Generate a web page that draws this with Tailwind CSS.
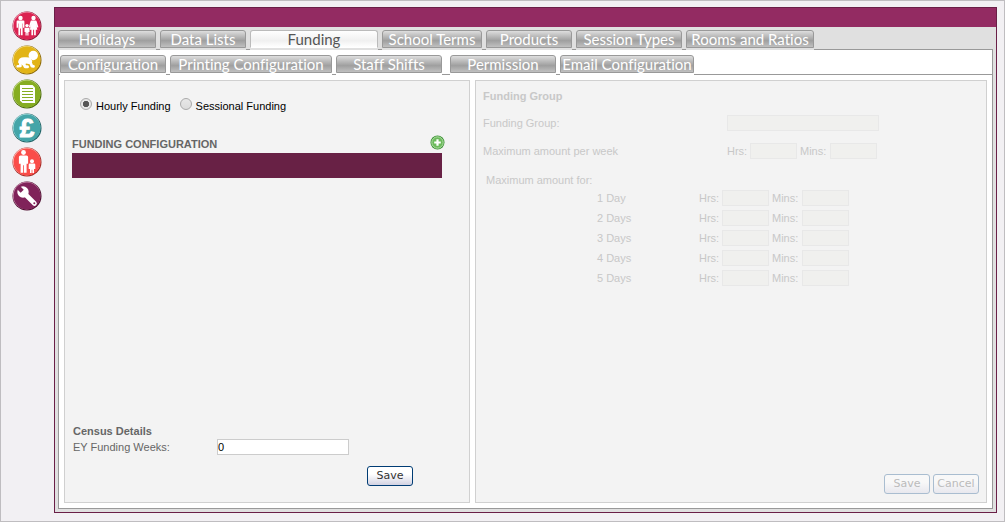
<!DOCTYPE html>
<html lang="en">
<head>
  <meta charset="UTF-8" />
  <meta name="viewport" content="width=device-width, initial-scale=1.0" />
  <title>Funding</title>
  <script src="https://cdn.jsdelivr.net/npm/@tailwindcss/browser@4"></script>
</head>
<body class="flex min-h-screen border border-[#bfbdc0] bg-[#f2f0f3] font-['Liberation_Sans',Arial,sans-serif] text-[11px] leading-4 text-[#666]">

  <!-- Side menu -->
  <nav class="flex w-[53px] flex-col items-center gap-1 pt-[10px] pr-px" aria-label="Main">
    <a href="#" aria-label="Families" class="block size-[30px]">
      <svg viewBox="0 0 30 30" class="size-full">
        <circle cx="15" cy="15" r="14.5" fill="#8f1335" /><circle cx="14.6" cy="14.6" r="13.8" fill="#f39ab0" /><circle cx="15" cy="15" r="13.4" fill="#db2351" />
        <g fill="#fff">
          <circle cx="8.5" cy="7" r="2.2" /><path d="M5.6 9.600h5.800q1 0 1 1v6.200H11v-4.400h-.4v11.900H9v-6.900h-.8v6.900H6.400V12.400H6v4.400H4.600v-6.200q0-1 1-1z" />
          <circle cx="21.500" cy="7" r="2.200" /><path d="M19.300 9.600h4.400q.8 0 1 .8l1.700 5.800-1.500.4-1.200-4 1.700 6.200h-1.600v5.500h-1.700v-5.500h-1v5.500h-1.700v-5.500h-1.600l1.700-6.200-1.200 4-1.500-.4 1.700-5.800q.2-.8 1-.8z" />
          <circle cx="15" cy="14.600" r="1.700" /><path d="M13.200 16.800h3.600q.7 0 .7.700v3.400h-1v3.600h-1.200v-2.800h-.6v2.800h-1.200v-3.600h-1v-3.400q0-.7.700-.7z" />
        </g>
      </svg>
    </a>
    <a href="#" aria-label="Children" class="block size-[30px]">
      <svg viewBox="0 0 30 30" class="size-full">
        <circle cx="15" cy="15" r="14.5" fill="#8d6a08" /><circle cx="14.6" cy="14.6" r="13.8" fill="#f3dc8a" /><circle cx="15" cy="15" r="13.4" fill="#e2b416" />
        <circle cx="21.300" cy="10.500" r="4.700" fill="#fff" />
        <path d="M6 17.500Q6.500 12.300 12 12.300q3.500-.3 5.300.3L20.500 16l-2.500 3.200-4-.700-2 2.500z" fill="#fff" />
        <g fill="none" stroke="#fff" stroke-linecap="round" stroke-linejoin="round">
          <path d="M17.500 15l2.300 6 1.700.3" stroke-width="2.800" />
          <path d="M10.500 17l2.700 4.700h2.300" stroke-width="3" />
          <path d="M8 17.500L8.500 21l-2.800.3" stroke-width="2.600" />
        </g>
      </svg>
    </a>
    <a href="#" aria-label="Registers" class="block size-[30px]">
      <svg viewBox="0 0 30 30" class="size-full">
        <circle cx="15" cy="15" r="14.5" fill="#4b6a0d" /><circle cx="14.6" cy="14.6" r="13.8" fill="#c5dc85" /><circle cx="15" cy="15" r="13.4" fill="#86ad22" />
        <path d="M8 6h12.500L23 8.500V24H10.500L8 21.500z" fill="#fff" />
        <path d="M10 9.500h11M10 12.500h11M10 15.500h11M10 18.500h11M10 21.500h11" stroke="#86ad22" />
      </svg>
    </a>
    <a href="#" aria-label="Finance" class="block size-[30px]">
      <svg viewBox="0 0 30 30" class="size-full">
        <circle cx="15" cy="15" r="14.5" fill="#1f6265" /><circle cx="14.6" cy="14.6" r="13.8" fill="#a3dadb" /><circle cx="15" cy="15" r="13.4" fill="#44a5a8" />
        <text x="15" y="24" text-anchor="middle" font-family="Liberation Sans" font-size="26" font-weight="700" fill="#fff" stroke="#fff">£</text>
      </svg>
    </a>
    <a href="#" aria-label="Staff" class="block size-[30px]">
      <svg viewBox="0 0 30 30" class="size-full">
        <circle cx="15" cy="15" r="14.5" fill="#a52a25" /><circle cx="14.6" cy="14.6" r="13.8" fill="#ffb4ae" /><circle cx="15" cy="15" r="13.4" fill="#fa4d49" />
        <g fill="#fff">
          <circle cx="11.500" cy="5.500" r="2.400" /><path d="M8.500 8.400h6q1.600 0 1.600 1.600v6.700h-1.500v9H12v-7.500h-.8v7.500H8.600v-9H6.900V10q0-1.600 1.600-1.600z" />
          <circle cx="20" cy="14.200" r="2" /><path d="M17.900 16.600h4.200q1.200 0 1.200 1.200v4.200H22v4h-1.600v-3.300h-.8V26H18v-4h-1.300v-4.200q0-1.200 1.200-1.200z" />
        </g>
      </svg>
    </a>
    <a href="#" aria-label="Settings" class="block size-[30px]">
      <svg viewBox="0 0 30 30" class="size-full">
        <circle cx="15" cy="15" r="14.5" fill="#4d0d2e" /><circle cx="14.6" cy="14.6" r="13.8" fill="#c88bac" /><circle cx="15" cy="15" r="13.4" fill="#80235a" />
        <circle cx="11" cy="11" r="5.700" fill="#fff" />
        <path d="M12 12l10.500 10.500" stroke="#fff" stroke-width="4.600" stroke-linecap="round" />
        <path d="M5.500 5.500l4.700 4.700" stroke="#80235a" stroke-width="4.400" />
        <circle cx="22.300" cy="22.300" r="1" fill="#80235a" />
      </svg>
    </a>
  </nav>

  <div class="mt-[6px] mr-[7px] mb-2 flex flex-1 flex-col border border-[#6a1f47] bg-[#e0e0e0]">
    <header class="h-[19px] bg-[#932b62]"></header>

    <div class="flex flex-1 flex-col p-[3px]">
      <!-- Main tabs -->
      <nav class="relative z-10 -mb-px flex gap-1 font-[Lato,sans-serif] text-[15px] leading-4 text-white [font-variant-ligatures:none]" aria-label="Sections">
        <a href="#" class="w-[98px] border-b-2 border-[#e0e0e0] text-center"><span class="block rounded-t-[3px] border border-[#999] bg-linear-to-b from-[#dedede] via-[#9f9f9f] via-60% to-[#c0c0c0]">Holidays</span></a>
        <a href="#" class="w-[86px] border-b-2 border-[#e0e0e0] text-center"><span class="block rounded-t-[3px] border border-[#999] bg-linear-to-b from-[#dedede] via-[#9f9f9f] via-60% to-[#c0c0c0]">Data Lists</span></a>
        <a href="#" class="w-[128px] border-b-2 border-[#e0e0e0] text-center text-[#555]" aria-current="page"><span class="block rounded-t-[3px] border border-[#bbb] border-b-white bg-linear-to-b from-white via-[#f0f0f0] via-60% to-white">Funding</span></a>
        <a href="#" class="w-[100px] border-b-2 border-[#e0e0e0] text-center"><span class="block rounded-t-[3px] border border-[#999] bg-linear-to-b from-[#dedede] via-[#9f9f9f] via-60% to-[#c0c0c0]">School Terms</span></a>
        <a href="#" class="w-[86px] border-b-2 border-[#e0e0e0] text-center"><span class="block rounded-t-[3px] border border-[#999] bg-linear-to-b from-[#dedede] via-[#9f9f9f] via-60% to-[#c0c0c0]">Products</span></a>
        <a href="#" class="w-[106px] border-b-2 border-[#e0e0e0] text-center"><span class="block rounded-t-[3px] border border-[#999] bg-linear-to-b from-[#dedede] via-[#9f9f9f] via-60% to-[#c0c0c0]">Session Types</span></a>
        <a href="#" class="w-[128px] border-b-2 border-[#e0e0e0] text-center"><span class="block rounded-t-[3px] border border-[#999] bg-linear-to-b from-[#dedede] via-[#9f9f9f] via-60% to-[#c0c0c0]">Rooms and Ratios</span></a>
      </nav>

      <div class="flex flex-1 flex-col border border-[#999] bg-white">
        <!-- Sub tabs -->
        <nav class="flex gap-1 border-b border-[#999] pt-[5px] pl-px font-[Lato,sans-serif] text-[15px] leading-4 text-white [font-variant-ligatures:none]" aria-label="Funding sections">
          <a href="#" class="-mb-px w-[106px] border-b-2 border-white text-center"><span class="block rounded-t-[3px] border border-[#999] bg-linear-to-b from-[#dedede] via-[#9f9f9f] via-60% to-[#c0c0c0]">Configuration</span></a>
          <a href="#" class="-mb-px w-[162px] border-b-2 border-white text-center"><span class="block rounded-t-[3px] border border-[#999] bg-linear-to-b from-[#dedede] via-[#9f9f9f] via-60% to-[#c0c0c0]">Printing Configuration</span></a>
          <a href="#" class="mr-1 -mb-px w-[106px] border-b-2 border-white text-center"><span class="block rounded-t-[3px] border border-[#999] bg-linear-to-b from-[#dedede] via-[#9f9f9f] via-60% to-[#c0c0c0]">Staff Shifts</span></a>
          <a href="#" class="-mb-px w-[106px] border-b-2 border-white text-center"><span class="block rounded-t-[3px] border border-[#999] bg-linear-to-b from-[#dedede] via-[#9f9f9f] via-60% to-[#c0c0c0]">Permission</span></a>
          <a href="#" class="-mb-px w-[134px] border-b-2 border-white text-center"><span class="block rounded-t-[3px] border border-[#999] bg-linear-to-b from-[#dedede] via-[#9f9f9f] via-60% to-[#c0c0c0]">Email Configuration</span></a>
        </nav>

        <main class="grid flex-1 grid-cols-[406px_1fr] gap-[5px] p-[5px]">
          <!-- Funding configuration -->
          <form class="flex flex-col border border-[#d0d0d0] bg-[#f3f3f3] px-[7px] pb-4">
            <div class="flex gap-[9px] pt-3 pl-2 text-black">
              <label class="flex items-center gap-1"><input type="radio" name="type" checked class="size-3 appearance-none rounded-full border border-[#aaa] bg-radial from-[#555] from-40% to-[#e6e6e6] to-50%" /><span class="pt-[5px]">Hourly Funding</span></label>
              <label class="flex items-center gap-1"><input type="radio" name="type" class="size-3 appearance-none rounded-full border border-[#aaa] bg-linear-to-b from-[#e8e8e8] to-[#dcdcdc]" /><span class="pt-[5px]">Sessional Funding</span></label>
            </div>

            <div class="mt-[17px] flex w-[373px] items-center justify-between">
              <h2 class="pt-[5px] pb-px font-bold">FUNDING CONFIGURATION</h2>
              <button type="button" aria-label="Add" class="size-[15px]">
                <svg viewBox="0 0 15 15" class="size-full">
                  <circle cx="7.5" cy="7.5" r="7" fill="#3f9438" /><circle cx="7.5" cy="7.5" r="5.7" fill="#6cbb5c" stroke="#b5dfa9" />
                  <path d="M7.5 4.200v6.600M4.200 7.500h6.600" stroke="#fff" stroke-width="2.200" />
                </svg>
              </button>
            </div>
            <div class="h-[25px] w-[370px] bg-[#682145]"></div>

            <div class="mt-auto pl-px">
              <h2 class="font-bold">Census Details</h2>
              <div class="flex items-center">
                <label for="weeks" class="w-36">EY Funding Weeks:</label>
                <input id="weeks" type="text" value="0" class="h-4 w-[132px] border border-[#ccc] bg-white text-black" />
              </div>
            </div>
            <div class="mt-[11px] pl-[295px]">
              <button type="submit" class="block h-5 w-[46px] rounded-[3px] border border-[#003c74] bg-linear-to-b from-white from-40% to-[#d2d2e2] font-['DejaVu_Sans',sans-serif] text-[11px] leading-4 text-[#333]">Save</button>
            </div>
          </form>

          <!-- Funding group, disabled until a row is picked -->
          <form class="border border-[#d0d0d0] bg-[#f3f3f3] text-[#c8c8c8]">
            <fieldset disabled class="flex h-full flex-col px-[7px] pt-[7px] pb-2">
              <h2 class="font-bold">Funding Group</h2>
              <div class="mt-[11px] flex items-center">
                <label for="group" class="w-[244px]">Funding Group:</label>
                <input id="group" type="text" class="h-4 w-[152px] border border-[#e8e8e8] bg-[#f0f0ee]" />
              </div>
              <div class="mt-3 flex items-center">
                <span class="w-[244px]">Maximum amount per week</span>
                <label for="wh" class="w-[23px]">Hrs:</label><input id="wh" type="text" class="h-4 w-[47px] border border-[#e8e8e8] bg-[#f0f0ee]" />
                <label for="wm" class="w-[33px] pl-[3px]">Mins:</label><input id="wm" type="text" class="h-4 w-[47px] border border-[#e8e8e8] bg-[#f0f0ee]" />
              </div>
              <h3 class="mt-[13px] pl-[3px]">Maximum amount for:</h3>
              <div class="mt-[2px] flex flex-col gap-1 pl-[114px]">
                <div class="flex items-center">
                  <span class="w-[102px]">1 Day</span>
                  <label for="h1" class="w-[23px]">Hrs:</label><input id="h1" type="text" class="h-4 w-[47px] border border-[#e8e8e8] bg-[#f0f0ee]" />
                  <label for="m1" class="w-[33px] pl-[3px]">Mins:</label><input id="m1" type="text" class="h-4 w-[47px] border border-[#e8e8e8] bg-[#f0f0ee]" />
                </div>
                <div class="flex items-center">
                  <span class="w-[102px]">2 Days</span>
                  <label for="h2" class="w-[23px]">Hrs:</label><input id="h2" type="text" class="h-4 w-[47px] border border-[#e8e8e8] bg-[#f0f0ee]" />
                  <label for="m2" class="w-[33px] pl-[3px]">Mins:</label><input id="m2" type="text" class="h-4 w-[47px] border border-[#e8e8e8] bg-[#f0f0ee]" />
                </div>
                <div class="flex items-center">
                  <span class="w-[102px]">3 Days</span>
                  <label for="h3" class="w-[23px]">Hrs:</label><input id="h3" type="text" class="h-4 w-[47px] border border-[#e8e8e8] bg-[#f0f0ee]" />
                  <label for="m3" class="w-[33px] pl-[3px]">Mins:</label><input id="m3" type="text" class="h-4 w-[47px] border border-[#e8e8e8] bg-[#f0f0ee]" />
                </div>
                <div class="flex items-center">
                  <span class="w-[102px]">4 Days</span>
                  <label for="h4" class="w-[23px]">Hrs:</label><input id="h4" type="text" class="h-4 w-[47px] border border-[#e8e8e8] bg-[#f0f0ee]" />
                  <label for="m4" class="w-[33px] pl-[3px]">Mins:</label><input id="m4" type="text" class="h-4 w-[47px] border border-[#e8e8e8] bg-[#f0f0ee]" />
                </div>
                <div class="flex items-center">
                  <span class="w-[102px]">5 Days</span>
                  <label for="h5" class="w-[23px]">Hrs:</label><input id="h5" type="text" class="h-4 w-[47px] border border-[#e8e8e8] bg-[#f0f0ee]" />
                  <label for="m5" class="w-[33px] pl-[3px]">Mins:</label><input id="m5" type="text" class="h-4 w-[47px] border border-[#e8e8e8] bg-[#f0f0ee]" />
                </div>
              </div>
              <div class="mt-auto flex justify-end gap-[3px] font-['DejaVu_Sans',sans-serif] leading-4 text-[#bbb]">
                <button type="submit" class="h-5 w-[46px] rounded-[3px] border border-[#a9bdd0] bg-linear-to-b from-[#f8f8f8] from-40% to-[#e8e8ee]">Save</button>
                <button type="button" class="h-5 w-[46px] rounded-[3px] border border-[#a9bdd0] bg-linear-to-b from-[#f8f8f8] from-40% to-[#e8e8ee]">Cancel</button>
              </div>
            </fieldset>
          </form>
        </main>
      </div>
    </div>
  </div>
</body>
</html>
